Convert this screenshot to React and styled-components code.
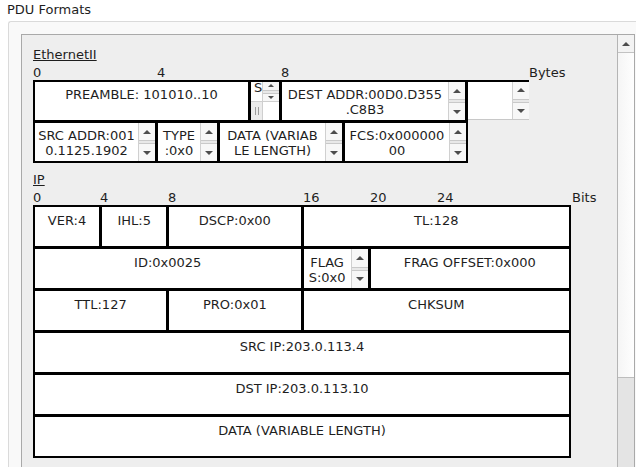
import React from 'react'
import styled, { createGlobalStyle } from 'styled-components'

const GlobalStyle = createGlobalStyle`
  html, body {
    margin: 0;
    padding: 0;
    background: #fff;
  }
  body {
    width: 636px;
    height: 467px;
    overflow: hidden;
    font-family: 'DejaVu Sans', 'Liberation Sans', sans-serif;
    font-size: 13px;
    color: #1e1e1e;
  }
`

const Title = styled.div`
  height: 21px;
  box-sizing: border-box;
  padding: 2px 0 0 7px;
  line-height: 15px;
`

const GroupBox = styled.div`
  margin-left: 8px;
  height: 460px;
  box-sizing: border-box;
  border: 1px solid #dadada;
  border-right: none;
  border-bottom: none;
  border-radius: 3px 0 0 0;
  background: #f9f9f9;
  padding: 12px 0 0 12px;
`

const Pane = styled.div`
  display: flex;
  width: 614px;
  height: 440px;
  box-sizing: border-box;
  border: 1px solid #a9a9a9;
  background: #eeeeee;
`

const Viewport = styled.div`
  flex: 1;
  padding: 12px 0 0 11px;
`

const VScroll = styled.div`
  width: 17px;
  flex: none;
  box-sizing: border-box;
  border-left: 1px solid #b4b4b4;
  display: flex;
  flex-direction: column;
  background: #e4e4e4;
`

const ScrollUp = styled.div`
  height: 18px;
  box-sizing: border-box;
  border-bottom: 1px solid #c2c2c2;
  background: #f3f3f3;
  display: flex;
  align-items: center;
  justify-content: center;
`

const Thumb = styled.div`
  height: 325px;
  box-sizing: border-box;
  border-bottom: 1px solid #bdbdbd;
  background: linear-gradient(to right, #f5f5f5, #fefefe);
`

const Arrow = styled.span`
  width: 0;
  height: 0;
  border-left: ${p => p.$size || 4}px solid transparent;
  border-right: ${p => p.$size || 4}px solid transparent;
  ${p => (p.$down ? 'border-top' : 'border-bottom')}: ${p => p.$size || 4}px solid #4d4d4d;
`

const Label = styled.div`
  line-height: 15px;
  margin-bottom: 3px;
  text-decoration: underline;
  margin-top: ${p => p.$top || 0}px;
`

const Ruler = styled.div`
  display: flex;
  height: 15px;
  line-height: 15px;
`

const Tick = styled.span`
  width: ${p => p.$w}px;
  flex: none;
`

const EthRow = styled.div`
  display: flex;
  width: fit-content;
  gap: 3px;
  box-sizing: border-box;
  background: #000;
  height: ${p => (p.$first ? 40 : 43)}px;
  padding: ${p => (p.$first ? '2px 0 0 2px' : '3px 2px 2px 2px')};
`

const IpTable = styled.div`
  display: grid;
  grid-template-columns: repeat(32, 1fr);
  grid-auto-rows: 39px;
  gap: 3px;
  width: 538px;
  box-sizing: border-box;
  border: 2px solid #000;
  background: #000;
`

const Field = styled.div`
  display: flex;
  min-width: 0;
  overflow: hidden;
  background: #fff;
  ${p => p.$w && `width: ${p.$w}px; flex: none;`}
  ${p => p.$span && `grid-column: span ${p.$span};`}
  ${p => p.$open && 'box-sizing: border-box; border-bottom: 1px solid #c8c8c8;'}
`

const FieldText = styled.div`
  flex: 1;
  min-width: 0;
  overflow: hidden;
  padding-top: ${p => p.$pad || 5}px;
  text-align: center;
  line-height: 15px;
  white-space: pre;
`

const Spinner = styled.div`
  width: 17px;
  flex: none;
  box-sizing: border-box;
  display: flex;
  flex-direction: column;
  gap: 2px;
  border-left: 1px solid #d0d0d0;
  background: #e8e8e8;
`

const SpinButton = styled.div`
  flex: 1;
  display: flex;
  align-items: center;
  justify-content: center;
  background: #f7f7f7;
  ${p => (p.$down ? 'border-top' : 'border-bottom')}: 1px solid #c9c9c9;
`

const MiniField = styled(Field)`
  flex-direction: column;
`

const MiniTop = styled.div`
  display: flex;
  height: 19px;
`

const MiniText = styled.div`
  flex: 1;
  overflow: hidden;
  padding-left: 3px;
  margin-top: -2px;
  line-height: 15px;
`

const MiniBar = styled.div`
  display: flex;
  height: 19px;
  box-sizing: border-box;
  border-top: 1px solid #cfcfcf;
  background: #ececec;
`

const Grip = styled.div`
  flex: 1;
  display: flex;
  align-items: center;
  justify-content: center;
  gap: 2px;
  &::before,
  &::after {
    content: '';
    width: 1px;
    height: 8px;
    background: #9c9c9c;
  }
`

const Corner = styled.div`
  width: 17px;
  box-sizing: border-box;
  border-left: 1px solid #cfcfcf;
  background: #fff;
`

const Spin = ({ size }) => (
  <Spinner>
    <SpinButton><Arrow $size={size} /></SpinButton>
    <SpinButton $down><Arrow $size={size} $down /></SpinButton>
  </Spinner>
)

const EthField = ({ w, text, spin }) => (
  <Field $w={w}>
    <FieldText>{text}</FieldText>
    {spin && <Spin />}
  </Field>
)

const IpField = ({ span, text, spin }) => (
  <Field $span={span}>
    <FieldText $pad={6}>{text}</FieldText>
    {spin && <Spin />}
  </Field>
)

const App = () => (
  <>
    <GlobalStyle />
    <Title>PDU Formats</Title>
    <GroupBox>
      <Pane>
        <Viewport>
          <Label>EthernetII</Label>
          <Ruler>
            <Tick $w={124}>0</Tick>
            <Tick $w={124}>4</Tick>
            <Tick $w={248}>8</Tick>
            <span>Bytes</span>
          </Ruler>
          <EthRow $first>
            <EthField w={213} text="PREAMBLE: 101010..10" />
            <MiniField $w={28}>
              <MiniTop>
                <MiniText>S</MiniText>
                <Spin size={3} />
              </MiniTop>
              <MiniBar>
                <Grip />
                <Corner />
              </MiniBar>
            </MiniField>
            <EthField w={183} text={'DEST ADDR:00D0.D355\n.C8B3'} spin />
            <Field $w={61} $open>
              <FieldText />
              <Spin />
            </Field>
          </EthRow>
          <EthRow>
            <EthField w={120} text={'SRC ADDR:001\n0.1125.1902'} spin />
            <EthField w={59} text={'TYPE\n:0x0'} spin />
            <EthField w={122} text={'DATA (VARIAB\nLE LENGTH)'} spin />
            <EthField w={121} text={'FCS:0x000000\n00'} spin />
          </EthRow>

          <Label $top={9}>IP</Label>
          <Ruler>
            <Tick $w={67}>0</Tick>
            <Tick $w={68}>4</Tick>
            <Tick $w={135}>8</Tick>
            <Tick $w={67}>16</Tick>
            <Tick $w={67}>20</Tick>
            <Tick $w={135}>24</Tick>
            <span>Bits</span>
          </Ruler>
          <IpTable>
            <IpField span={4} text="VER:4" />
            <IpField span={4} text="IHL:5" />
            <IpField span={8} text="DSCP:0x00" />
            <IpField span={16} text="TL:128" />
            <IpField span={16} text="ID:0x0025" />
            <IpField span={4} text={'FLAG\nS:0x0'} spin />
            <IpField span={12} text="FRAG OFFSET:0x000" />
            <IpField span={8} text="TTL:127" />
            <IpField span={8} text="PRO:0x01" />
            <IpField span={16} text="CHKSUM" />
            <IpField span={32} text="SRC IP:203.0.113.4" />
            <IpField span={32} text="DST IP:203.0.113.10" />
            <IpField span={32} text="DATA (VARIABLE LENGTH)" />
          </IpTable>
        </Viewport>
        <VScroll>
          <ScrollUp><Arrow /></ScrollUp>
          <Thumb />
        </VScroll>
      </Pane>
    </GroupBox>
  </>
)

export default App
